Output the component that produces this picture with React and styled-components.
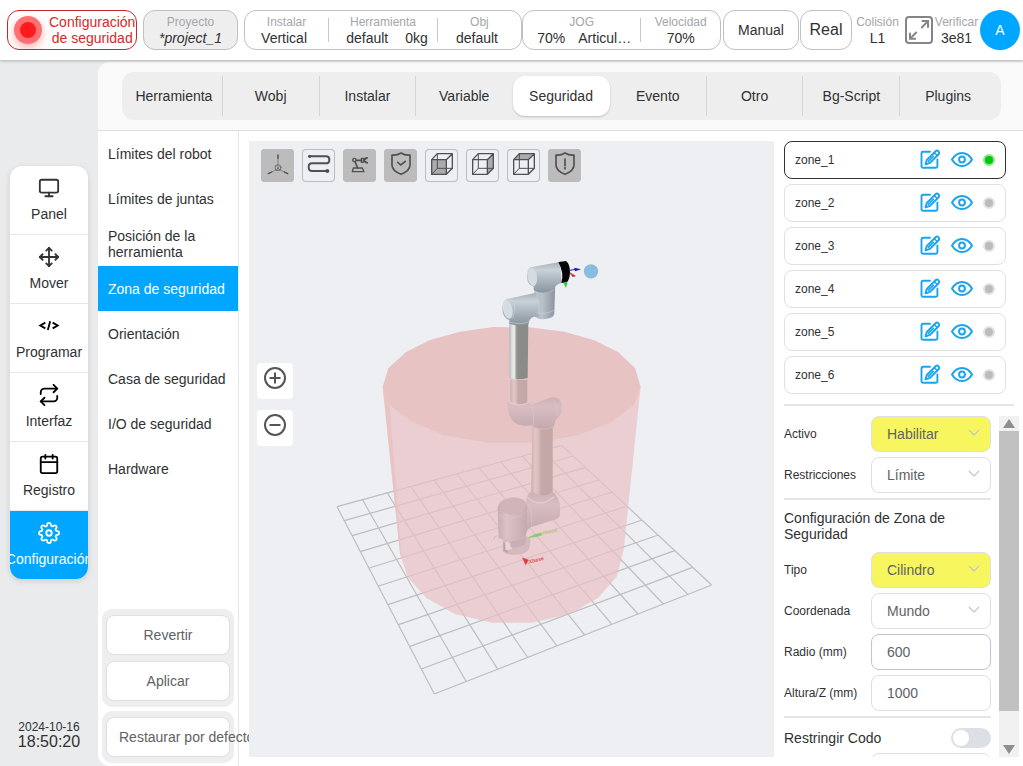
import React, { useState } from "react";
import styled, { createGlobalStyle, css } from "styled-components";
import { FiMonitor, FiMove, FiRepeat, FiCalendar, FiSettings } from "react-icons/fi";

const GlobalStyle = createGlobalStyle`
  *, *::before, *::after { box-sizing: border-box; }
  body {
    margin: 0;
    background: #e9ebed;
    color: #303133;
    font: 14px/16px "Liberation Sans", Arial, sans-serif;
  }
  button, input, select { font: inherit; color: inherit; margin: 0; }
  button { padding: 0; border: 0; background: none; cursor: pointer; }
  svg { display: block; flex: none; }
`;

const Page = styled.div`
  display: flex;
  flex-direction: column;
  height: 100vh;
  overflow: hidden;
`;

/* ---------- header ---------- */
const Header = styled.header`
  display: flex;
  align-items: center;
  height: 60px;
  flex: none;
  padding: 0 3px 0 7px;
  background: #fff;
  box-shadow: 0 1px 3px rgba(0, 0, 0, 0.24);
  position: relative;
  z-index: 3;
`;

const HeaderBox = styled.div`
  display: flex;
  align-items: center;
  justify-content: center;
  flex: ${(p) => p.$grow || 0} 1 ${(p) => p.$basis}px;
  min-width: 0;
  height: 40px;
  margin-right: ${(p) => p.$gap || 0}px;
  border: 1px solid #c0c0c0;
  border-radius: 12px;
  background: ${(p) => (p.$muted ? "#eee" : "#fff")};
  font-size: ${(p) => (p.$large ? 16 : 14)}px;
  white-space: nowrap;
`;

const AlertBox = styled(HeaderBox)`
  justify-content: flex-start;
  gap: 7px;
  padding-left: 6px;
  border-color: #c5292a;
  color: #d32a2a;
  text-align: center;
  overflow: hidden;
`;

const Lamp = styled.span`
  flex: none;
  width: 28px;
  height: 28px;
  border: 6px solid #ff7072;
  border-radius: 50%;
  background: #ff1a1c;
  box-shadow: 0 4px 10px rgba(255, 40, 40, 0.35);
`;

const Cell = styled.div`
  display: flex;
  flex-direction: column;
  align-items: center;
  justify-content: center;
  flex: ${(p) => p.$flex || "none"};
  min-width: 0;
  width: ${(p) => (p.$width ? p.$width + "px" : "auto")};
  height: 24px;
  white-space: nowrap;
  & + & { border-left: 1px solid #c9c9c9; }
`;

const Caption = styled.span`
  font-size: 12px;
  color: #a3a6ab;
`;

const Values = styled.span`
  display: flex;
  gap: ${(p) => p.$gap || 0}px;
  padding: ${(p) => p.$pad || "0"};
  font-style: ${(p) => (p.$italic ? "italic" : "normal")};
`;

const ModeButton = styled(HeaderBox).attrs({ as: "button", type: "button" })``;

const IconButton = styled.button`
  display: flex;
  flex: none;
  margin-left: 2px;
`;

const Avatar = styled.button`
  flex: none;
  width: 40px;
  height: 40px;
  margin-left: auto;
  border-radius: 50%;
  background: #00a6ff;
  color: #fff;
`;

/* ---------- main frame ---------- */
const Body = styled.div`
  display: flex;
  flex: 1;
  min-height: 0;
`;

const Sidebar = styled.aside`
  display: flex;
  flex-direction: column;
  flex: none;
  width: 98px;
  padding: 0 10px;
`;

const NavArea = styled.div`
  display: flex;
  flex: 1;
  align-items: center;
`;

const Nav = styled.nav`
  width: 100%;
  border-radius: 12px;
  overflow: hidden;
  background: #fff;
  box-shadow: 0 2px 6px rgba(0, 0, 0, 0.12);
`;

const NavItem = styled.button`
  display: flex;
  flex-direction: column;
  align-items: center;
  gap: 5px;
  width: 100%;
  height: 69px;
  padding-top: 11px;
  border-bottom: 1px solid #e8e8e8;
  line-height: 20px;
  white-space: nowrap;
  &:last-child { border-bottom: 0; height: 68px; }
  ${(p) => p.$active && css`background: #00a6ff; color: #fff;`}
  svg { color: ${(p) => (p.$active ? "#fff" : p.$dark ? "#000" : "#333")}; }
`;

const Clock = styled.div`
  flex: none;
  height: 81px;
  padding-top: 35px;
  text-align: center;
  font-size: 16px;
  line-height: 16px;
  small { display: block; font-size: 12px; line-height: 14px; }
`;

const Content = styled.main`
  display: flex;
  flex-direction: column;
  flex: 1;
  min-width: 0;
  margin-top: 2px;
  border-radius: 12px 0 0 12px;
  background: #fff;
  overflow: hidden;
`;

const TabStrip = styled.div`
  flex: none;
  padding: 10px 22px 10px 24px;
  background: #fafafa;
  border-bottom: 1px solid #dcdcdc;
`;

const Tabs = styled.div`
  display: flex;
  padding: 4px;
  border-radius: 12px;
  background: #eee;
`;

const Tab = styled.button`
  flex: 1 1 0;
  min-width: 0;
  height: 40px;
  border-right: 1px solid ${(p) => (p.$plain ? "transparent" : "#d6d6d6")};
  ${(p) => p.$active && css`
    border-color: transparent;
    border-radius: 12px;
    background: #fff;
    box-shadow: 0 1px 2px rgba(0, 0, 0, 0.2);
  `}
`;

const Workspace = styled.div`
  display: flex;
  flex: 1;
  min-height: 0;
`;

/* ---------- sub menu ---------- */
const SubPanel = styled.div`
  display: flex;
  flex-direction: column;
  flex: none;
  width: 141px;
  border-right: 1px solid #e8e8e8;
`;

const SubMenu = styled.nav`
  flex: 1;
  min-height: 0;
`;

const SubItem = styled.button`
  display: flex;
  align-items: center;
  width: 100%;
  height: 45px;
  padding: 0 10px;
  text-align: left;
  ${(p) => p.$active && css`background: #00a6ff; color: #fff;`}
`;

const ActionGroup = styled.div`
  display: grid;
  grid-template-columns: minmax(0, 1fr);
  gap: 6px;
  flex: none;
  margin: 0 4px ${(p) => (p.$last ? 3 : 4)}px;
  padding: 6px 4px;
  border-radius: 10px;
  background: #eee;
`;

const ActionButton = styled.button`
  display: flex;
  align-items: center;
  justify-content: safe center;
  min-width: 0;
  height: 40px;
  padding: 0 12px;
  border: 1px solid #dcdfe6;
  border-radius: 8px;
  background: #fff;
  color: #606266;
  white-space: nowrap;
`;

/* ---------- 3D view ---------- */
const Viewport = styled.section`
  position: relative;
  z-index: 1;
  flex: 1;
  min-width: 0;
  margin: 10px 0 9px 10px;
  background: #eeeff3;
`;

const Scene = styled.svg`
  position: absolute;
  inset: 0;
  width: 100%;
  height: 100%;
`;

const Toolbar = styled.div`
  position: relative;
  display: flex;
  gap: 8px;
  padding: 8px 12px;
`;

const Tool = styled.button`
  width: 33px;
  height: 33px;
  border-radius: 4px;
  background: ${(p) => (p.$on ? "#bcbcbc" : "transparent")};
  box-shadow: inset 0 0 0 1px #bcbcbc;
  svg { width: 100%; height: 100%; }
`;

const ZoomStack = styled.div`
  position: absolute;
  top: 36%;
  left: 8px;
  display: grid;
  gap: 11px;
`;

const ZoomButton = styled.button`
  display: flex;
  justify-content: center;
  align-items: center;
  width: 36px;
  height: 36px;
  padding-bottom: 6px;
  border-radius: 4px;
  background: #fff;
`;

/* ---------- zone panel ---------- */
const ZonePanel = styled.section`
  display: flex;
  flex-direction: column;
  flex: none;
  width: 249px;
  min-height: 0;
  padding: 10px 0 9px 10px;
`;

const ZoneList = styled.ul`
  display: grid;
  gap: 5px;
  flex: none;
  margin: 0 17px 0 0;
  padding: 0;
  list-style: none;
`;

const ZoneRow = styled.li`
  display: flex;
  align-items: center;
  height: 38px;
  padding: 0 10px;
  border: 1px solid ${(p) => (p.$active ? "#303133" : "#dfe0e3")};
  border-radius: 8px;
  font-size: 12px;
`;

const ZoneName = styled.span`
  flex: 1;
`;

const RowIcon = styled.button`
  display: flex;
  margin-right: 10px;
`;

const Dot = styled.span`
  width: 12px;
  height: 12px;
  border: 2px solid ${(p) => (p.$on ? "#8fe58f" : "#e2e2e2")};
  border-radius: 50%;
  background: ${(p) => (p.$on ? "#00c80a" : "#bcbcbc")};
`;

const Rule = styled.hr`
  flex: none;
  width: auto;
  height: 2px;
  margin: ${(p) => (p.$wide ? "10px 9px 10px 0" : "0 0 5px")};
  border: 0;
  background: #e4e6ec;
`;

const ScrollArea = styled.div`
  display: flex;
  flex: 1;
  gap: 8px;
  min-height: 0;
  padding-right: 4px;
`;

const Form = styled.form`
  display: flex;
  flex-direction: column;
  gap: 5px;
  flex: 1;
  min-width: 0;
  overflow: hidden;
`;

const Field = styled.div`
  position: relative;
  display: flex;
  align-items: center;
  justify-content: ${(p) => (p.$end ? "flex-end" : "space-between")};
  flex: none;
  label { font-size: ${(p) => (p.$large ? 14 : 12)}px; }
  svg { position: absolute; right: 11px; top: 12px; pointer-events: none; }
`;

const control = css`
  width: 120px;
  height: 36px;
  padding: 0 15px;
  border: 1px solid ${(p) => (p.$strong ? "#c0c4cc" : "#dcdfe6")};
  border-radius: 8px;
  background: ${(p) => (p.$changed ? "#f8f65f" : "#fff")};
  color: #606266;
  outline: none;
`;

const Select = styled.select`
  appearance: none;
  ${control}
`;

const TextInput = styled.input`
  ${control}
`;

const Title = styled.h2`
  flex: none;
  margin: 0 0 5px;
  font-size: 14px;
  line-height: 16px;
  font-weight: normal;
`;

const Switch = styled.input`
  appearance: none;
  width: 40px;
  height: 20px;
  margin: 0;
  padding: 2px;
  border-radius: 10px;
  background: #dcdfe6;
  &::before {
    content: "";
    display: block;
    width: 16px;
    height: 16px;
    border-radius: 50%;
    background: #fff;
  }
  &:checked { background: #00a6ff; }
  &:checked::before { margin-left: 20px; }
`;

const ScrollBar = styled.div`
  display: flex;
  flex-direction: column;
  flex: 0 0 20px;
  background: #f1f1f1;
`;

const ScrollButton = styled.button`
  display: flex;
  align-items: center;
  justify-content: center;
  height: 15px;
  svg { fill: #8f8f8f; }
`;

const ScrollTrack = styled.div`
  flex: 1;
  &::before {
    content: "";
    display: block;
    height: 90%;
    background: #c1c1c1;
  }
`;

/* ---------- icons ---------- */
function CodeIcon() {
  return (
    <svg width="22" height="22" viewBox="0 0 66 66" fill="none" stroke="#000" strokeWidth="5.5">
      <path d="M22 23 L7 31.5 L22 40 M44 23 L59 31.5 L44 40" />
      <path d="M36.5 19 L29.5 45" />
    </svg>
  );
}

function FullscreenIcon() {
  return (
    <svg width="28" height="28" viewBox="0 0 84 84" fill="none" stroke="#858585" strokeWidth="6">
      <rect x="3" y="3" width="78" height="78" rx="9" />
      <path d="M50 15 H69 V35 M68 16 L49 36 M33 68 H15 V50 M16 67 L35 48" strokeWidth="6" />
    </svg>
  );
}

function EditIcon() {
  return (
    <svg width="22" height="22" viewBox="0 0 22 22" fill="none" stroke="#1ba4ee" strokeWidth="1.9" strokeLinejoin="round" strokeLinecap="round">
      <path d="M11 2.800 H4 Q2.500 2.800 2.500 4.200 V17.600 Q2.500 18.800 4 18.800 H17 Q18.400 18.800 18.400 17.600 V10.500" />
      <path d="M6.500 15.300 L7.800 11 L16.800 2 Q18 1 19.300 2.100 Q20.800 3.600 19.800 5 L11 13.900 Z" />
      <path d="M15.400 3.700 L18.300 6.500 M9.400 12.400 L14.400 7.400" strokeWidth="1.500" />
    </svg>
  );
}

function EyeIcon() {
  return (
    <svg width="22" height="22" viewBox="0 0 22 22" fill="none" stroke="#1ba4ee" strokeWidth="2" strokeLinejoin="round">
      <path d="M1 10.500 Q4.800 4 11 4 Q17.200 4 21 10.500 Q17.200 17 11 17 Q4.800 17 1 10.500 Z" />
      <circle cx="11" cy="10.500" r="2.900" />
    </svg>
  );
}

function ChevronIcon() {
  return (
    <svg width="12" height="10" viewBox="0 0 12 10" fill="none" stroke="#c0c4cc" strokeWidth="1.1">
      <path d="M1 2 L6 7 L11 2" />
    </svg>
  );
}

function CubeIcon({ face }) {
  const faces = {
    front: "M20 32 H64 V76 H20 Z",
    right: "M64 32 L82 14 V58 L64 76 Z",
    top: "M20 32 L37 14 H82 L64 32 Z",
  };
  return (
    <g strokeWidth="4">
      <path d={faces[face]} fill="#9a9a9c" fillOpacity="0.8" stroke="none" />
      <path d="M37 14 V58 H82 M37 58 L20 76" strokeWidth="3" />
      <path d="M20 32 L37 14 H82 V58 L64 76 H20 Z M20 32 H64 V76 M64 32 L82 14" />
    </g>
  );
}

const shieldPath = "M24 18 Q38 20 51 12 Q64 20 78 18 V48 Q78 65 51 76 Q24 65 24 48 Z";

const TOOLS = [
  {
    name: "Ejes", on: true, icon: (
      <g strokeWidth="2">
        <path d="M51 18 V60 L24 73 M51 60 L78 73" strokeWidth="1.5" />
        <circle cx="51" cy="56" r="9" />
        <path d="M51 28 V18 M22 74 L32 69 M80 74 L70 69" strokeWidth="4" />
        <path d="M45 51 L57 63 M57 51 L45 63" strokeWidth="1" />
      </g>
    ),
  },
  {
    name: "Trayectoria", icon: (
      <g>
        <path d="M24 22 H72 Q82 22 82 32 Q82 43 72 43 H30 Q20 43 20 54 Q20 66 30 66 H76" strokeWidth="6" />
        <circle cx="23" cy="22" r="5" fill="#505052" stroke="none" />
        <circle cx="76" cy="66" r="6" fill="#505052" stroke="none" />
      </g>
    ),
  },
  {
    name: "Robot", on: true, icon: (
      <g strokeWidth="4">
        <path d="M31 57 H58 L63 68 H28 Z" />
        <path d="M36 38 L44 57 M39 34 L55 34" strokeWidth="5" />
        <circle cx="34" cy="33" r="5" fill="#bcbcbc" />
        <path d="M55 28 H61 V40 H55 Z M73 26 Q63 27 64 34 Q64 41 73 42 M65 32 L73 27 M65 36 L73 41" />
      </g>
    ),
  },
  { name: "Seguridad", on: true, icon: <g><path d={shieldPath} /><path d="M41 40 L50 48 L64 37" /></g> },
  { name: "Vista frontal", icon: <CubeIcon face="front" /> },
  { name: "Vista lateral", icon: <CubeIcon face="right" /> },
  { name: "Vista superior", icon: <CubeIcon face="top" /> },
  { name: "Alerta", on: true, icon: <g><path d={shieldPath} /><path d="M51 30 V50 M51 56 V60" /></g> },
];

/* ---------- scene ---------- */
const GRID = {
  left: [[51, 620], [73, 662], [97, 707], [121, 755], [148, 804], [176, 858], [204, 914], [236, 974], [268, 1040], [304, 1107], [343, 1182]],
  right: [[725, 436], [760, 468], [797, 502], [836, 540], [877, 576], [922, 618], [967, 660], [1015, 705], [1064, 752], [1118, 802], [1175, 855]],
  back: [[51, 620], [128, 600], [202, 579], [273, 560], [343, 541], [411, 522], [478, 505], [543, 487], [606, 468], [667, 452], [725, 436]],
  front: [[343, 1182], [438, 1144], [532, 1106], [622, 1071], [710, 1037], [793, 1004], [874, 971], [954, 942], [1030, 912], [1104, 883], [1175, 855]],
};

const join = (a, b) => a.map((p, i) => `M${p[0]} ${p[1]} L${b[i][0]} ${b[i][1]}`).join(" ");

function Gradient({ id, stops, vertical }) {
  return (
    <linearGradient id={id} x1="0" y1="0" x2={vertical ? 0 : 1} y2={vertical ? 1 : 0}>
      {stops.map(([offset, color]) => <stop key={offset} offset={offset} stopColor={color} />)}
    </linearGradient>
  );
}

function RobotScene() {
  return (
    <Scene viewBox="249 141 525 616" role="img" aria-label="Robot">
      <defs>
        <Gradient id="tube" stops={[[0, "#aeb2b5"], [0.12, "#d9dbdc"], [0.26, "#efefee"], [0.36, "#a0a09f"], [0.45, "#8b8b8a"], [1, "#8a8a89"]]} />
        <Gradient id="tubePink" stops={[[0, "#cdafb1"], [0.2, "#e2c6c6"], [0.32, "#dabdbe"], [0.48, "#c5a8a8"], [1, "#c3a6a6"]]} />
        <Gradient id="metal" vertical stops={[[0, "#a7b0b9"], [0.25, "#c9d1d9"], [0.6, "#aab4be"], [1, "#88929c"]]} />
        <Gradient id="metalSide" stops={[[0, "#aeb8c2"], [0.4, "#b9c2cb"], [1, "#89949f"]]} />
        <Gradient id="metalPink" vertical stops={[[0, "#cbb0b6"], [0.3, "#d8bec2"], [1, "#c3a9ad"]]} />
        <Gradient id="metalPinkSide" stops={[[0, "#c8adb1"], [0.3, "#dcc3c6"], [1, "#c4aaae"]]} />
      </defs>

      <g transform="translate(320 300) scale(0.333333)">
        <path d={join(GRID.left, GRID.right) + join(GRID.back, GRID.front)} stroke="#bdbdbe" strokeWidth="3.500" fill="none" />
        <path d="M188 260 L240 760 L263 832 L318 893 L405 942 L515 968 L635 968 L748 943 L835 893 L890 830 L911 750 L962 260 Z" fill="rgb(234,193,194)" fillOpacity="0.7" />
        <path d="M188 260 L209 316 L245 780 L240 760 Z" fill="#e7c2c2" fillOpacity="0.8" />
        <path d="M188 260 L205 205 L257 157 L330 120 L420 95 L520 81 L628 82 L733 95 L823 121 L895 157 L945 204 L962 260 L942 315 L875 366 L776 405 L648 428 L503 428 L370 405 L272 363 L209 316 Z" fill="#e7c4c3" />
      </g>

      <g transform="translate(480 380) scale(0.333333)">
        <path d="M50 468 L42 472 L44 478" stroke="#c5a9ad" strokeWidth="2" fill="none" />
        <path d="M68 470 Q110 455 148 472 Q154 486 148 504 Q140 524 105 524 Q80 525 69 516 Z" fill="#d3babd" />
        <path d="M70 488 L78 488 L84 518 L70 512 Z" fill="#bca2a6" />
        <path d="M76 486 L86 484 L96 508 L76 510 Z" fill="#e9d5d6" />
        <path d="M92 486 L92 500 Q116 506 136 492 L138 472 Z" fill="#c9afb3" />

        <path d="M158 110 H218 V360 Q188 370 153 352 Z" fill="url(#tubePink)" />
        <path d="M91 0 H142 V75 H91 Z" fill="url(#tubePink)" />
        <path d="M82 64 Q116 84 149 66 L152 74 L215 52 Q240 48 245 72 Q247 96 241 106 Q224 116 222 140 Q190 154 160 142 L158 136 Q115 142 98 122 Q82 104 82 64 Z" fill="url(#metalPink)" />
        <path d="M82 64 Q116 84 149 66" stroke="#e2cbcd" strokeWidth="4" fill="none" />
        <path d="M214 53 Q231 66 232 108 M154 74 Q165 100 160 137 M160 142 Q190 154 222 140" stroke="#dfc8ca" strokeWidth="1.500" fill="none" />

        <path d="M140 350 Q150 332 158 336 Q188 356 218 336 Q238 350 240 380 V404 Q238 416 222 420 L154 441 Q142 446 138 460 L138 370 Z" fill="url(#metalPink)" />
        <path d="M140 350 Q180 388 222 350" stroke="#e6cac8" strokeWidth="4" fill="none" />
        <path d="M53 382 Q60 354 97 352 Q136 352 142 380 L138 468 Q98 490 56 474 Z" fill="url(#metalPinkSide)" />
        <ellipse cx="99" cy="379" rx="38" ry="25" fill="#cfb5b9" />
        <path d="M54 404 Q94 432 140 394 M145 375 Q160 400 154 440" stroke="#e0c9cb" strokeWidth="1.500" fill="none" />

        <path d="M148 472 L164 464 L183 459 L186 465 L166 470 Z" fill="#7fd060" stroke="#86cc6c" strokeWidth="2" />
        <path d="M128 534 L145 540 L137 554 Z" fill="#e0383c" stroke="#e0484b" strokeWidth="2" />
        <g fontFamily="Liberation Sans, sans-serif" fontSize="16" fontStyle="italic" fontWeight="bold">
          <text transform="translate(186 465) rotate(-12)" fill="#bbc67c">Ybase</text>
          <text transform="translate(147 551) rotate(-14)" fill="#e1575a">Xbase</text>
        </g>
      </g>

      <g transform="translate(480 250) scale(0.333333)">
        <path d="M88 215 H145 L143 384 Q115 392 89 384 Z" fill="url(#tube)" />
        <path d="M164 110 L226 92 L223 190 Q222 206 190 208 Q166 206 160 194 Z" fill="url(#metalSide)" />
        <path d="M80 147 L165 129 Q182 145 176 200 Q152 198 147 215 L146 221 Q116 232 88 221 L88 210 Q68 205 67 178 Q67 152 80 147 Z" fill="url(#metal)" />
        <ellipse cx="83" cy="178" rx="14" ry="29" fill="#d5dde4" transform="rotate(-12 83 178)" />
        <path d="M151 52 L240 36 L245 98 Q224 104 222 120 Q195 138 166 124 Q158 118 162 110 Q143 107 141 82 Q141 57 151 52 Z" fill="url(#metal)" />
        <ellipse cx="157" cy="81" rx="14" ry="27" fill="#d5dde4" transform="rotate(-8 157 81)" />
        <path d="M163 50 Q177 78 163 109 M92 146 Q112 165 98 206 M170 128 Q182 160 176 194 M163 124 Q190 136 222 120 M89 216 Q116 226 146 216 M169 188 Q195 196 222 180" stroke="#d0d7dd" strokeWidth="1.500" fill="none" />
        <path d="M235 36 L258 33 Q270 42 270 66 Q270 88 260 97 L244 99 Q253 68 235 36 Z" fill="#050505" />
        <path d="M270 61 L286 58" stroke="#2422bd" strokeWidth="3" />
        <path d="M283 53 L303 58 L285 64 Z" fill="#1818bd" />
        <path d="M270 68 L286 78 L278 80 Z" fill="#e02828" stroke="#d72929" strokeWidth="2" />
        <path d="M250 98 L263 96 L258 114 Z" fill="#26d13a" />
        <circle cx="333" cy="64" r="21.500" fill="#89bddf" />
      </g>
    </Scene>
  );
}

/* ---------- data ---------- */
const NAV = [
  { label: "Panel", icon: <FiMonitor size={22} /> },
  { label: "Mover", icon: <FiMove size={22} /> },
  { label: "Programar", icon: <CodeIcon /> },
  { label: "Interfaz", icon: <FiRepeat size={22} />, dark: true },
  { label: "Registro", icon: <FiCalendar size={22} />, dark: true },
  { label: "Configuración", icon: <FiSettings size={22} /> },
];
const TABS = ["Herramienta", "Wobj", "Instalar", "Variable", "Seguridad", "Evento", "Otro", "Bg-Script", "Plugins"];
const SUBMENU = ["Límites del robot", "Límites de juntas", "Posición de la herramienta", "Zona de seguridad", "Orientación", "Casa de seguridad", "I/O de seguridad", "Hardware"];
const ZONES = ["zone_1", "zone_2", "zone_3", "zone_4", "zone_5", "zone_6"];

function SelectField({ id, label, value, changed }) {
  return (
    <Field>
      <label htmlFor={id}>{label}</label>
      <Select id={id} $changed={changed} defaultValue={value}>
        <option>{value}</option>
      </Select>
      <ChevronIcon />
    </Field>
  );
}

function InputField({ id, label, value, strong }) {
  return (
    <Field>
      <label htmlFor={id}>{label}</label>
      <TextInput id={id} type="text" defaultValue={value} $strong={strong} />
    </Field>
  );
}

export default function App() {
  const [nav, setNav] = useState(5);
  const [tab, setTab] = useState(4);
  const [sub, setSub] = useState(3);

  return (
    <Page>
      <GlobalStyle />
      <Header>
        <AlertBox $basis={130} $gap={6}>
          <Lamp />
          <span>Configuración<br />de seguridad</span>
        </AlertBox>
        <HeaderBox $basis={95} $gap={6} $muted>
          <Cell>
            <Caption>Proyecto</Caption>
            <Values $italic>*project_1</Values>
          </Cell>
        </HeaderBox>
        <HeaderBox $grow={2} $basis={278}>
          <Cell $flex="84 1 0"><Caption>Instalar</Caption><Values $pad="0 5px 0 0">Vertical</Values></Cell>
          <Cell $flex="109 1 0">
            <Caption>Herramienta</Caption>
            <Values $gap={17} $pad="0 0 0 8px"><span>default</span><span>0kg</span></Values>
          </Cell>
          <Cell $flex="84 1 0"><Caption>Obj</Caption><Values $pad="0 5px 0 0">default</Values></Cell>
        </HeaderBox>
        <HeaderBox $grow={1} $basis={199} $gap={2}>
          <Cell $flex="118 1 0">
            <Caption>JOG</Caption>
            <Values $gap={13} $pad="0 0 0 5px"><span>70%</span><span>Articul…</span></Values>
          </Cell>
          <Cell $flex="79 1 0"><Caption>Velocidad</Caption><Values>70%</Values></Cell>
        </HeaderBox>
        <ModeButton $basis={76} $gap={1}>Manual</ModeButton>
        <ModeButton $basis={52} $large>Real</ModeButton>
        <Cell $width={51}><Caption>Colisión</Caption><Values>L1</Values></Cell>
        <IconButton type="button" aria-label="Pantalla completa"><FullscreenIcon /></IconButton>
        <Cell $width={47}><Caption>Verificar</Caption><Values>3e81</Values></Cell>
        <Avatar type="button">A</Avatar>
      </Header>

      <Body>
        <Sidebar>
          <NavArea>
            <Nav>
              {NAV.map((item, i) => (
                <NavItem key={item.label} type="button" $active={i === nav} $dark={item.dark} onClick={() => setNav(i)}>
                  {item.icon}
                  <span>{item.label}</span>
                </NavItem>
              ))}
            </Nav>
          </NavArea>
          <Clock><small>2024-10-16</small>18:50:20</Clock>
        </Sidebar>

        <Content>
          <TabStrip>
            <Tabs>
              {TABS.map((label, i) => (
                <Tab key={label} type="button" $active={i === tab} $plain={i === tab - 1 || i === TABS.length - 1} onClick={() => setTab(i)}>
                  {label}
                </Tab>
              ))}
            </Tabs>
          </TabStrip>

          <Workspace>
            <SubPanel>
              <SubMenu>
                {SUBMENU.map((label, i) => (
                  <SubItem key={label} type="button" $active={i === sub} onClick={() => setSub(i)}>{label}</SubItem>
                ))}
              </SubMenu>
              <ActionGroup>
                <ActionButton type="button">Revertir</ActionButton>
                <ActionButton type="button">Aplicar</ActionButton>
              </ActionGroup>
              <ActionGroup $last>
                <ActionButton type="button">Restaurar por defecto</ActionButton>
              </ActionGroup>
            </SubPanel>

            <Viewport>
              <RobotScene />
              <Toolbar>
                {TOOLS.map((tool) => (
                  <Tool key={tool.name} type="button" aria-label={tool.name} $on={tool.on}>
                    <svg viewBox="0 0 99 99" fill="none" stroke="#505052" strokeWidth="5" strokeLinejoin="round" strokeLinecap="round">
                      {tool.icon}
                    </svg>
                  </Tool>
                ))}
              </Toolbar>
              <ZoomStack>
                {["Acercar", "Alejar"].map((name, i) => (
                  <ZoomButton key={name} type="button" aria-label={name}>
                    <svg width="24" height="24" viewBox="0 0 24 24" fill="none" stroke="#555" strokeWidth="2">
                      <circle cx="12" cy="12" r="10" />
                      <path d={i === 0 ? "M6.5 12 H17.5 M12 6.5 V17.5" : "M6.5 12 H17.5"} />
                    </svg>
                  </ZoomButton>
                ))}
              </ZoomStack>
            </Viewport>

            <ZonePanel>
              <ZoneList>
                {ZONES.map((zone, i) => (
                  <ZoneRow key={zone} $active={i === 0}>
                    <ZoneName>{zone}</ZoneName>
                    <RowIcon type="button" aria-label={`Editar ${zone}`}><EditIcon /></RowIcon>
                    <RowIcon type="button" aria-label={`Ver ${zone}`}><EyeIcon /></RowIcon>
                    <Dot $on={i === 0} />
                  </ZoneRow>
                ))}
              </ZoneList>
              <Rule $wide />
              <ScrollArea>
                <Form>
                  <SelectField id="activo" label="Activo" value="Habilitar" changed />
                  <SelectField id="restricciones" label="Restricciones" value="Límite" />
                  <Rule />
                  <Title>Configuración de Zona de Seguridad</Title>
                  <SelectField id="tipo" label="Tipo" value="Cilindro" changed />
                  <SelectField id="coordenada" label="Coordenada" value="Mundo" />
                  <InputField id="radio" label="Radio (mm)" value="600" strong />
                  <InputField id="altura" label="Altura/Z (mm)" value="1000" />
                  <Rule />
                  <Field $large>
                    <label htmlFor="codo">Restringir Codo</label>
                    <Switch id="codo" type="checkbox" role="switch" />
                  </Field>
                  <Field $end>
                    <TextInput type="text" aria-label="Codo" />
                  </Field>
                </Form>
                <ScrollBar>
                  <ScrollButton type="button" aria-label="Subir">
                    <svg width="12" height="9" viewBox="0 0 12 9"><path d="M0 9 L6 0 L12 9 Z" /></svg>
                  </ScrollButton>
                  <ScrollTrack />
                  <ScrollButton type="button" aria-label="Bajar">
                    <svg width="12" height="9" viewBox="0 0 12 9"><path d="M0 0 L6 9 L12 0 Z" /></svg>
                  </ScrollButton>
                </ScrollBar>
              </ScrollArea>
            </ZonePanel>
          </Workspace>
        </Content>
      </Body>
    </Page>
  );
}
